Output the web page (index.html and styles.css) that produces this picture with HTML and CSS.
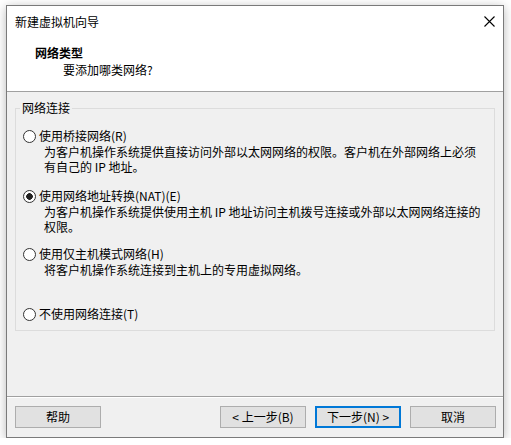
FILE: index.html
```html
<!DOCTYPE html>
<html lang="zh-CN">
<head>
<meta charset="utf-8">
<title>新建虚拟机向导</title>
<link rel="stylesheet" href="styles.css">
</head>
<body>
<div class="window">
  <div class="titlebar">
    <span class="title">新建虚拟机向导</span>
    <svg class="close" width="11" height="11" viewBox="0 0 11 11"><path d="M0.5 0.5L10.5 10.5M10.5 0.5L0.5 10.5" stroke="#000" stroke-width="1.1" fill="none"/></svg>
  </div>
  <div class="header">
    <div class="h-title">网络类型</div>
    <div class="h-sub">要添加哪类网络?</div>
  </div>
  <div class="content">
    <fieldset class="group">
      <legend>网络连接</legend>
      <div class="options">
        <div class="option opt1">
          <div class="opt-label"><span class="radio"></span>使用桥接网络(R)</div>
          <div class="opt-desc">
            <div class="line">为客户机操作系统提供直接访问外部以太网网络的权限。客户机在外部网络上必须</div>
            <div class="line">有自己的 IP 地址。</div>
          </div>
        </div>
        <div class="option opt2">
          <div class="opt-label"><span class="radio checked"></span>使用网络地址转换(NAT)(E)</div>
          <div class="opt-desc">
            <div class="line">为客户机操作系统提供使用主机 IP 地址访问主机拨号连接或外部以太网网络连接的</div>
            <div class="line">权限。</div>
          </div>
        </div>
        <div class="option opt3">
          <div class="opt-label"><span class="radio"></span>使用仅主机模式网络(H)</div>
          <div class="opt-desc">
            <div class="line">将客户机操作系统连接到主机上的专用虚拟网络。</div>
          </div>
        </div>
        <div class="option opt4">
          <div class="opt-label"><span class="radio"></span>不使用网络连接(T)</div>
        </div>
      </div>
    </fieldset>
  </div>
  <div class="footer">
    <button class="btn">帮助</button>
    <div class="spacer"></div>
    <button class="btn">&lt; 上一步(B)</button>
    <button class="btn primary">下一步(N) &gt;</button>
    <button class="btn">取消</button>
  </div>
</div>
</body>
</html>
```
FILE: styles.css
```css
* { box-sizing: border-box; }
html, body { margin: 0; padding: 0; }
body {
  background: #ffffff;
  font-family: "Noto Sans CJK SC", "Noto Sans", sans-serif;
  font-size: 12px;
  color: #000;
  padding: 5px 0 0 6px;
}
.window {
  width: 498px;
  height: 433px;
  border: 1px solid #7a7a7a;
  background: #f0f0f0;
  box-shadow: 0 2px 10px rgba(0,0,0,0.28);
  display: flex;
  flex-direction: column;
}
.titlebar {
  height: 30px;
  background: #fff;
  display: flex;
  align-items: center;
  justify-content: space-between;
  padding: 1px 8px 0 8px;
  line-height: 16px;
}
.close { display: block; }
.header {
  height: 56px;
  background: #fff;
  padding: 8px 0 0 28px;
  border-bottom: 1px solid #a0a0a0;
}
.h-title { font-weight: bold; line-height: 17px; }
.h-sub { line-height: 17px; padding-left: 28px; }
.content {
  height: 305px;
  padding: 8px 8px 0 8px;
  border-bottom: 1px solid #a0a0a0;
  box-shadow: 0 1px 0 #fff;
}
.group {
  margin: 0;
  height: 231px;
  border: 1px solid #dcdcdc;
  padding: 0 0 0 4px;
}
.group legend {
  padding: 0 2px;
  line-height: 16px;
}
.options { padding: 12px 0 0 3px; }
.opt-label {
  display: flex;
  align-items: center;
  line-height: 16px;
}
.radio {
  width: 13px;
  height: 13px;
  border: 1px solid #333;
  border-radius: 50%;
  background: #fff;
  margin-right: 3px;
  flex: none;
}
.radio.checked {
  background: radial-gradient(circle, #222 0, #222 3px, #fff 3.6px);
}
.opt-desc {
  padding-left: 21px;
}
.opt-desc .line {
  height: 15px;
  line-height: 15px;
  white-space: nowrap;
}
.opt2 { margin-top: 14px; }
.opt3 { margin-top: 12px; }
.opt4 { margin-top: 29px; }
.footer {
  flex: 1;
  display: flex;
  align-items: flex-start;
  gap: 9px;
  padding: 9px 7px 0 8px;
}
.spacer { flex: 1; }
.btn {
  width: 86px;
  height: 22px;
  background: #e1e1e1;
  border: 1px solid #adadad;
  font-family: inherit;
  font-size: 12px;
  color: #000;
  padding: 0;
  line-height: 18px;
}
.btn.primary {
  border: 2px solid #0078d7;
}
```
